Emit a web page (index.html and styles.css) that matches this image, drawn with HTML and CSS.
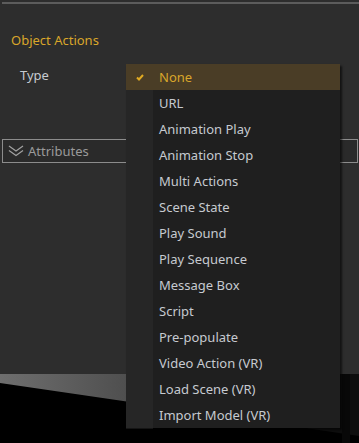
FILE: index.html
```html
<!DOCTYPE html>
<html lang="en">
<head>
    <meta charset="UTF-8">
    <meta name="viewport" content="width=device-width, initial-scale=1.0">
    <title>Object Actions</title>
    <link rel="stylesheet" href="styles.css">
</head>
<body>
    <div class="panel">
        <div class="top-line"></div>
        <h2 class="section-title">Object Actions</h2>

        <div class="field">
            <span class="field-label">Type</span>
        </div>

        <div class="group-bar">
            <svg class="group-icon" width="16" height="12" viewBox="0 0 16 12">
                <polyline points="1,1 8,6 15,1" />
                <polyline points="1,5.5 8,10.5 15,5.5" />
            </svg>
            <span>Attributes</span>
        </div>
    </div>

    <!-- Vista 3D de fondo -->
    <div class="scene">
        <svg width="359" height="69" viewBox="0 0 359 69">
            <defs>
                <linearGradient id="floor" x1="0" y1="0" x2="1" y2="0">
                    <stop offset="0" stop-color="#6e6e6e" />
                    <stop offset="1" stop-color="#4e4e4e" />
                </linearGradient>
            </defs>
            <rect width="359" height="69" fill="#000" />
            <polygon points="0,0 130,0 130,28 0,9" fill="url(#floor)" />
            <polygon points="130,0 359,0 359,62 130,28" fill="#0e0e0e" />
            <rect x="342" y="0" width="8" height="69" fill="#080808" />
        </svg>
    </div>

    <!-- Menú desplegable del tipo -->
    <ul class="dropdown">
        <li class="dropdown-item selected">
            <svg class="check" width="8" height="7" viewBox="0 0 8 7">
                <polyline points="1,3.5 3,5.5 7,1" />
            </svg>
            None
        </li>
        <li class="dropdown-item">URL</li>
        <li class="dropdown-item">Animation Play</li>
        <li class="dropdown-item">Animation Stop</li>
        <li class="dropdown-item">Multi Actions</li>
        <li class="dropdown-item">Scene State</li>
        <li class="dropdown-item">Play Sound</li>
        <li class="dropdown-item">Play Sequence</li>
        <li class="dropdown-item">Message Box</li>
        <li class="dropdown-item">Script</li>
        <li class="dropdown-item">Pre-populate</li>
        <li class="dropdown-item">Video Action (VR)</li>
        <li class="dropdown-item">Load Scene (VR)</li>
        <li class="dropdown-item">Import Model (VR)</li>
    </ul>
</body>
</html>
```

FILE: styles.css
```css
/* Estilos generales */
* {
    margin: 0;
    padding: 0;
    box-sizing: border-box;
}

body {
    font-family: 'Noto Sans', 'Open Sans', sans-serif;
    font-size: 13px;
    background-color: #2d2d2d;
    color: #c6cad0;
    width: 359px;
    height: 443px;
    overflow: hidden;
    position: relative;
}

/* Panel de propiedades */
.panel {
    height: 374px;
    padding-top: 2px;
}

.top-line {
    height: 2px;
    margin-left: 2px;
    background-color: #5c5c5c;
}

.section-title {
    font-size: 13px;
    font-weight: normal;
    line-height: 20px;
    margin-top: 26px;
    padding-left: 11px;
    color: #d9a62a;
}

.field {
    display: flex;
    align-items: center;
    height: 26px;
    margin-top: 12px;
    padding-left: 20px;
}

.field-label {
    line-height: 20px;
    color: #c6cad0;
}

.group-bar {
    display: flex;
    align-items: center;
    gap: 4px;
    height: 24px;
    margin: 51px 1px 0 2px;
    padding-left: 5px;
    border: 1px solid #8c8c8c;
    background-color: #2a2a2a;
    color: #9a9a9a;
}

.group-icon {
    fill: none;
    stroke: #a0a0a0;
    stroke-width: 1.3;
}

/* Fondo 3D */
.scene {
    height: 69px;
}

.scene svg {
    display: block;
}

/* Menú desplegable */
.dropdown {
    position: absolute;
    top: 64px;
    left: 126px;
    width: 214px;
    list-style: none;
    background-color: #1f1f1f;
    box-shadow: 2px 2px 2px rgba(0, 0, 0, 0.6);
}

.dropdown-item {
    position: relative;
    height: 26px;
    line-height: 26px;
    padding-left: 33px;
    white-space: nowrap;
}

.dropdown-item::before {
    content: '';
    position: absolute;
    left: 0;
    top: 0;
    width: 27px;
    height: 100%;
    background-color: #262626;
    border-bottom: 1px solid #151515;
}

.dropdown-item.selected {
    background-color: #4a3d26;
    color: #d9a62a;
}

.dropdown-item.selected::before {
    display: none;
}

.check {
    position: absolute;
    left: 10px;
    top: 10px;
    fill: none;
    stroke: #e0aa22;
    stroke-width: 2;
}
```
